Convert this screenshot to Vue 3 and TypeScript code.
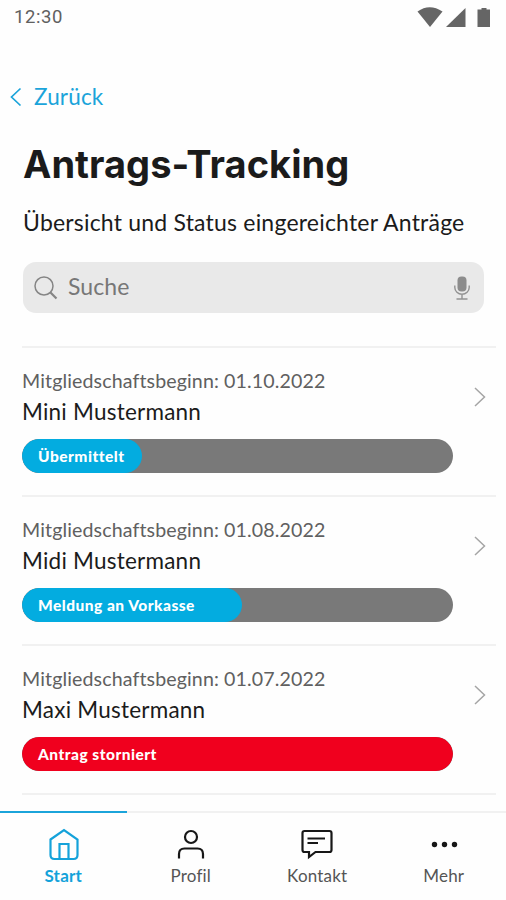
<script setup lang="ts">
interface Application {
  date: string
  name: string
  status: string
  progress: number
  kind: 'active' | 'cancelled'
}

const applications: Application[] = [
  { date: '01.10.2022', name: 'Mini Mustermann', status: 'Übermittelt', progress: 27.8, kind: 'active' },
  { date: '01.08.2022', name: 'Midi Mustermann', status: 'Meldung an Vorkasse', progress: 51, kind: 'active' },
  { date: '01.07.2022', name: 'Maxi Mustermann', status: 'Antrag storniert', progress: 100, kind: 'cancelled' },
]
</script>

<template>
  <div class="screen">
    <header class="statusbar">
      <span class="clock">12:30</span>
      <svg class="system" width="76" height="22" viewBox="0 0 76 22">
        <path d="M0.500 4.500Q12.500-4 25.500 4.500L13 20Z" />
        <path d="M48.500 1V20H29Z" />
        <path d="M60.500 2.500H64.500V1H69.500V2.500H73V20H60.500Z" />
      </svg>
    </header>

    <a class="back">
      <svg width="12" height="20" viewBox="0 0 12 20"><path d="M10.500 1.500L1.500 10L10.500 18.500" /></svg>
      <span class="back-label">Zurück</span>
    </a>

    <h1 class="title">Antrags-Tracking</h1>
    <p class="subtitle">Übersicht und Status eingereichter Anträge</p>

    <div class="search">
      <svg class="lens" width="24" height="24" viewBox="0 0 24 24">
        <circle cx="10" cy="10" r="9" />
        <path d="M16.500 16.500L22.500 22.500" />
      </svg>
      <span class="placeholder">Suche</span>
      <svg class="mic" width="16" height="24" viewBox="0 0 16 24">
        <rect x="3.500" y="0.500" width="9" height="15" rx="4" />
        <path d="M0.800 9.500V11.500A7.200 6.800 0 0 0 15.200 11.500V9.500M8 18.500V23M2.500 23H13.500" />
      </svg>
    </div>

    <main class="list">
      <article v-for="item in applications" :key="item.name" class="entry">
        <div class="details">
          <div class="date">Mitgliedschaftsbeginn: {{ item.date }}</div>
          <div class="name">{{ item.name }}</div>
          <div class="track">
            <div class="fill" :class="item.kind" :style="{ width: item.progress + '%' }">
              <span class="status">{{ item.status }}</span>
            </div>
          </div>
        </div>
        <svg class="chevron" width="12" height="20" viewBox="0 0 12 20"><path d="M1 1L10.500 10L1 19" /></svg>
      </article>
    </main>

    <nav class="tabs">
      <a class="tab current">
        <svg width="32" height="34" viewBox="0 0 32 34">
          <path d="M2.500 11.500L16 2L29.500 11.500V27Q29.500 31 25.500 31H6.500Q2.500 31 2.500 27Z" />
          <path d="M11.500 30.500V16H20.500V30.500" />
        </svg>
        <span class="label">Start</span>
      </a>
      <a class="tab">
        <svg width="32" height="34" viewBox="0 0 32 34">
          <circle cx="16" cy="9" r="6" />
          <path d="M4 30.500V26Q4 20.500 9.500 20.500H22.500Q28 20.500 28 26V30.500" />
        </svg>
        <span class="label">Profil</span>
      </a>
      <a class="tab">
        <svg width="32" height="34" viewBox="0 0 32 34">
          <path d="M3.500 3H28.500Q30.500 3 30.500 5V22Q30.500 24 28.500 24H14.500L8 29V24H3.500Q1.500 24 1.500 22V5Q1.500 3 3.500 3Z" />
          <path d="M6.500 10.500H24M6.500 15H17" />
        </svg>
        <span class="label">Kontakt</span>
      </a>
      <a class="tab">
        <svg class="dots" width="32" height="34" viewBox="0 0 32 34">
          <circle cx="6.500" cy="16.500" r="2.700" /><circle cx="16.500" cy="16.500" r="2.700" /><circle cx="26.500" cy="16.500" r="2.700" />
        </svg>
        <span class="label">Mehr</span>
      </a>
    </nav>
  </div>
</template>

<style>
body { background: #fefefe; }
</style>

<style scoped>
.screen {
  width: 506px;
  height: 900px;
  display: flex;
  flex-direction: column;
  overflow: hidden;
  background: #fefefe;
  color: #1b1b1b;
  font-family: Lato, "Liberation Sans", sans-serif;
  white-space: nowrap;
}
svg { display: block; flex: none; fill: none; }
.statusbar {
  height: 36px;
  flex: none;
  display: flex;
  justify-content: space-between;
  padding: 0 13px 0 14px;
}
.clock { font: 400 18.5px/35px Roboto, sans-serif; letter-spacing: .6px; color: #606060; }
.system { fill: #656565; margin-top: 7px; }
.back {
  display: flex;
  align-items: center;
  gap: 12px;
  height: 30px;
  margin-top: 46px;
  padding-left: 10px;
  margin-bottom: 29px;
  color: #1ba4da;
  flex: none;
}
.back svg { stroke: currentColor; stroke-width: 1.7; margin-top: -1px; }
.back-label { font-size: 22.5px; line-height: 30px; letter-spacing: .15px; }
.title {
  margin: 0 0 0 23px;
  font: 700 38px/46px Inter, sans-serif;
  letter-spacing: .03px;
}
.subtitle { margin: 20px 0 0 23px; font-size: 23px; line-height: 30px; letter-spacing: .2px; }
.search {
  margin: 25px 22px 0 23px;
  height: 51px;
  flex: none;
  display: flex;
  align-items: center;
  padding: 0 14px 0 11px;
  border-radius: 13px;
  background: #e9e9e9;
  color: #777;
}
.lens { stroke: #858585; stroke-width: 1.5; }
.lens path { stroke-width: 2.2; }
.placeholder { margin-left: 10px; font-size: 23px; flex: 1; letter-spacing: .1px; margin-top: -4px; }
.mic { stroke: #929292; stroke-width: 1.4; }
.mic rect { fill: #8c8c8c; stroke: none; }
.list { margin: 33px 10px 0 22px; border-top: 2px solid #f1f1f1; }
.entry { height: 149px; box-sizing: border-box; border-bottom: 2px solid #f1f1f1; display: flex; }
.details { width: 431px; padding-top: 19px; }
.date { font-size: 19.6px; line-height: 28px; letter-spacing: .12px; color: #606060; }
.name { margin-top: 1px; font-size: 22.5px; line-height: 32px; letter-spacing: .23px; }
.track { margin-top: 11px; height: 34px; border-radius: 17px; background: #797979; overflow: hidden; }
.fill { height: 34px; border-radius: 17px; display: flex; align-items: center; padding-left: 16px; box-sizing: border-box; }
.active { background: #03ace0; }
.cancelled { background: #f0001e; }
.status { color: #fff; font-size: 15.5px; font-weight: 900; letter-spacing: .48px; }
.chevron { margin: 39px 0 0 21px; stroke: #a5a5a5; stroke-width: 1.5; }
.tabs {
  margin-top: auto;
  height: 89px;
  box-sizing: border-box;
  flex: none;
  display: grid;
  grid-template-columns: repeat(4, 1fr);
}
.tab {
  border-top: 2px solid #f1f1f1;
  padding: 15px 0 0 2px;
  display: flex;
  flex-direction: column;
  align-items: center;
  color: #555;
}
.tab svg { stroke: #171717; stroke-width: 2.2; }
.tab .dots { fill: #171717; stroke: none; }
.label { font-size: 17px; line-height: 24px; margin-top: 2px; letter-spacing: .2px; }
.current { border-color: #1ba4da; color: #14a2da; padding-left: 0; }
.tab.current svg { stroke: #14a2da; margin-left: 1px; }
.current .label { font-weight: 700; }
</style>
